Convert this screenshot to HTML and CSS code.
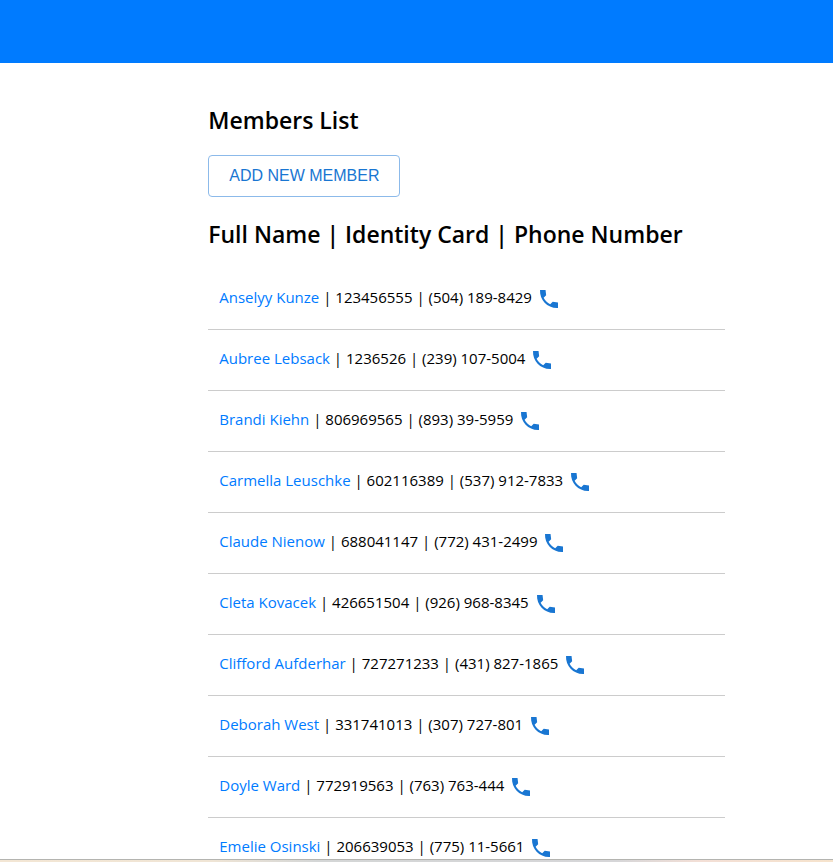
FILE: index.html
```html
<!DOCTYPE html>
<html lang="en">
<head>
<meta charset="utf-8">
<title>Members List</title>
<link rel="stylesheet" href="styles.css">
</head>
<body>
<svg class="sprite" aria-hidden="true"><symbol id="phone" viewBox="0 0 24 24"><path d="M21 15.46l-5.27-.61-2.52 2.52c-2.83-1.44-5.15-3.75-6.59-6.59l2.53-2.53L8.54 3H3.03C2.45 13.18 10.82 21.55 21 20.97v-5.51z"/></symbol></svg>
<header class="topbar"></header>
<main class="members">
  <h1 class="heading">Members List</h1>
  <button class="add" type="button">ADD NEW MEMBER</button>
  <h2 class="heading">Full Name | Identity Card | Phone Number</h2>
  <ul class="list">
    <li class="row"><span><a href="#">Anselyy Kunze</a> | 123456555 | (504) 189-8429</span><svg class="phone"><use href="#phone"/></svg></li>
    <li class="row"><span><a href="#">Aubree Lebsack</a> | 1236526 | (239) 107-5004</span><svg class="phone"><use href="#phone"/></svg></li>
    <li class="row"><span><a href="#">Brandi Kiehn</a> | 806969565 | (893) 39-5959</span><svg class="phone"><use href="#phone"/></svg></li>
    <li class="row"><span><a href="#">Carmella Leuschke</a> | 602116389 | (537) 912-7833</span><svg class="phone"><use href="#phone"/></svg></li>
    <li class="row"><span><a href="#">Claude Nienow</a> | 688041147 | (772) 431-2499</span><svg class="phone"><use href="#phone"/></svg></li>
    <li class="row"><span><a href="#">Cleta Kovacek</a> | 426651504 | (926) 968-8345</span><svg class="phone"><use href="#phone"/></svg></li>
    <li class="row"><span><a href="#">Clifford Aufderhar</a> | 727271233 | (431) 827-1865</span><svg class="phone"><use href="#phone"/></svg></li>
    <li class="row"><span><a href="#">Deborah West</a> | 331741013 | (307) 727-801</span><svg class="phone"><use href="#phone"/></svg></li>
    <li class="row"><span><a href="#">Doyle Ward</a> | 772919563 | (763) 763-444</span><svg class="phone"><use href="#phone"/></svg></li>
    <li class="row"><span><a href="#">Emelie Osinski</a> | 206639053 | (775) 11-5661</span><svg class="phone"><use href="#phone"/></svg></li>
  </ul>
</main>
<footer class="edge"></footer>
</body>
</html>
```

FILE: styles.css
```css
* {
  box-sizing: border-box;
}

body {
  margin: 0;
  height: 100vh;
  display: flex;
  flex-direction: column;
  overflow: hidden;
  background: #fff;
  color: #000;
  font: 15px/24px "Segoe UI", "Open Sans", sans-serif;
}

.sprite {
  display: none;
}

.topbar {
  flex: none;
  height: 63px;
  background: #007bff;
}

.members {
  flex: 1;
  min-height: 0;
  overflow: hidden;
  width: 62%;
  margin-left: 25%;
  padding-top: 41px;
}

.heading {
  margin: 0;
  font-size: 23px;
  line-height: 32px;
  font-weight: 600;
  white-space: nowrap;
}

.add {
  display: block;
  height: 42px;
  margin: 19px 0 21px;
  padding: 0 20px;
  border: 1px solid #8cbaea;
  border-radius: 4px;
  background: #fff;
  color: #1976d2;
  font: 16px/24px "Liberation Sans", Arial, sans-serif;
}

.list {
  margin: 19px 0 0;
  padding: 0;
  list-style: none;
}

.row {
  display: flex;
  align-items: center;
  gap: 5px;
  height: 61px;
  padding: 0 11px;
  border-bottom: 1px solid #ccc;
  white-space: nowrap;
}

.row span {
  padding-bottom: 4px;
}

.row a {
  color: #007bff;
  text-decoration: none;
}

.phone {
  width: 24px;
  height: 24px;
  fill: #1976d2;
}

.edge {
  flex: none;
  height: 3px;
  border-top: 1px solid #b4b4b0;
  background: linear-gradient(90deg, #f3e6d4 0%, #f0e5d5 25%, #d4d6d6 38%, #d6d6d8 74%, #f3dfd6 84%, #f6e3cc 100%);
}
```
